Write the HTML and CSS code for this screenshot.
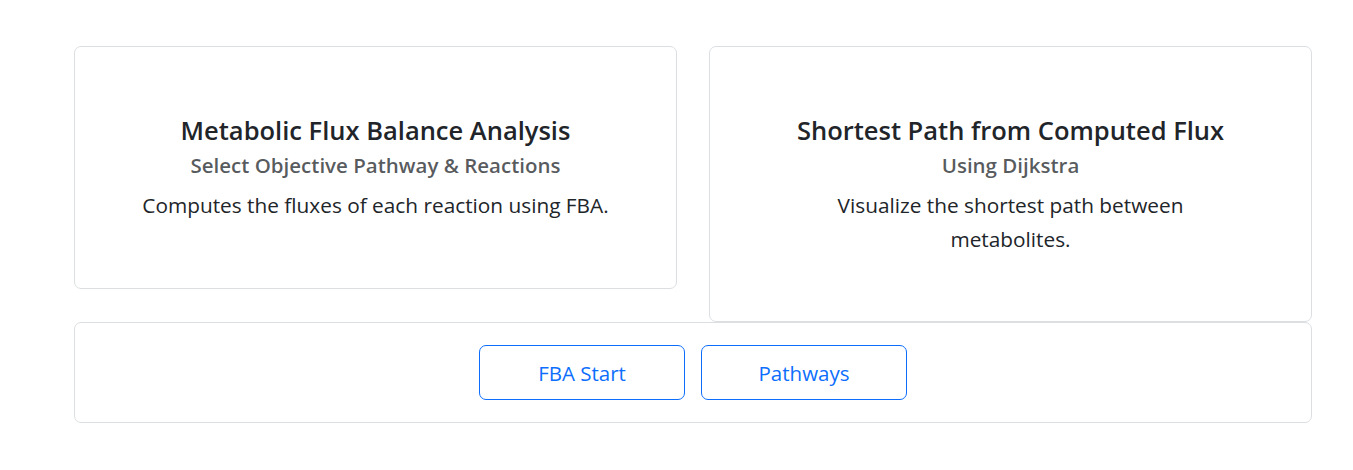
FILE: index.html
```html
<!DOCTYPE html>
<html lang="en">
<head>
<meta charset="utf-8">
<title>Metabolic Tools</title>
<link rel="stylesheet" href="styles.css">
</head>
<body>
<div class="container">
  <div class="row">
    <div class="card feature">
      <h5 class="card-title">Metabolic Flux Balance Analysis</h5>
      <h6 class="card-subtitle">Select Objective Pathway &amp; Reactions</h6>
      <p class="card-text">Computes the fluxes of each reaction using FBA.</p>
    </div>
    <div class="card feature">
      <h5 class="card-title">Shortest Path from Computed Flux</h5>
      <h6 class="card-subtitle">Using Dijkstra</h6>
      <p class="card-text narrow">Visualize the shortest path between metabolites.</p>
    </div>
  </div>
  <div class="card actions">
    <button class="btn">FBA Start</button>
    <button class="btn">Pathways</button>
  </div>
</div>
</body>
</html>
```
FILE: styles.css
```css
* { box-sizing: border-box; }
html, body { margin: 0; padding: 0; background: #fff; }
body {
  font-family: "Open Sans", "Noto Sans", sans-serif;
  color: #212529;
}
.container {
  width: 1238px;
  margin: 46px 0 0 74px;
}
.row {
  display: flex;
  gap: 32px;
  align-items: flex-start;
}
.card {
  border: 1px solid #dcdfe2;
  border-radius: 7px;
  background: #fff;
}
.feature {
  flex: 1 1 0;
  text-align: center;
  padding: 68px 20px 66px;
}
.feature:last-child { padding-bottom: 65px; }
.card-title {
  margin: 0 0 8px;
  font-size: 25.5px;
  line-height: 30px;
  font-weight: 600;
  color: #212529;
}
.card-subtitle {
  margin: 0 0 11px;
  font-size: 20.5px;
  line-height: 24px;
  font-weight: 600;
  color: rgba(33, 37, 41, 0.75);
}
.card-text {
  margin: 0;
  font-size: 20.8px;
  line-height: 34px;
}
.narrow {
  max-width: 400px;
  margin: 0 auto;
}
.actions {
  display: flex;
  justify-content: center;
  gap: 16px;
  padding: 22px 0 22px;
}
.btn {
  width: 206px;
  height: 55px;
  border: 1px solid #0d6efd;
  border-radius: 7px;
  background: #fff;
  color: #0d6efd;
  font-family: "Open Sans", "Noto Sans", sans-serif;
  font-size: 20.5px;
  line-height: 30px;
  padding: 0;
  cursor: pointer;
}
```
